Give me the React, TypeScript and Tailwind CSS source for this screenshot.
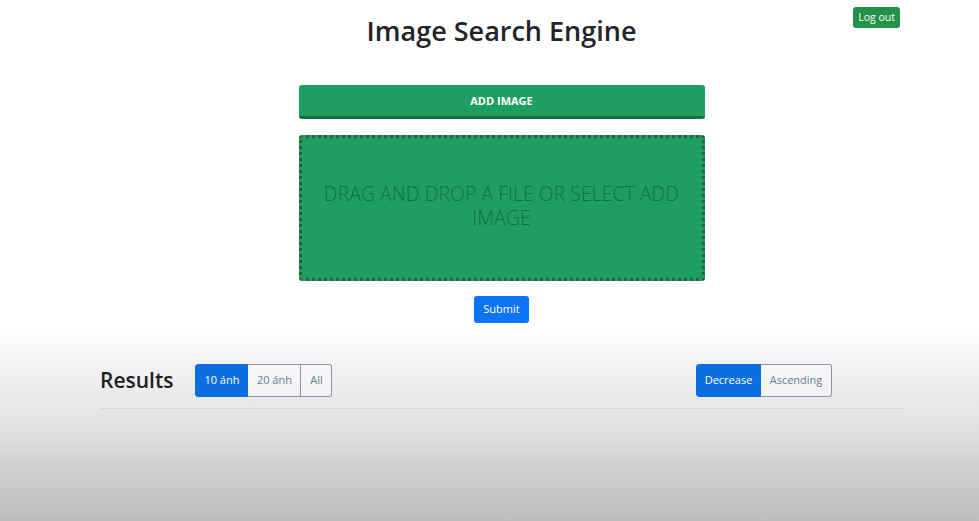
import React, { useState } from "react";

const App: React.FC = () => {
    const [limit, setLimit] = useState("10");
    const [order, setOrder] = useState("decrease");

    const groupBtn = (active: boolean) =>
        active
            ? "bg-[#0b6fe0] text-white border-[#0b6fe0]"
            : "bg-white/40 text-[#6b7a93] border-[#8a96a8]";

    return (
        <div
            className="flex min-h-screen flex-col"
            style={{ fontFamily: '"Open Sans", "Noto Sans", sans-serif' }}
        >
            <div className="bg-white pb-[3px]">
                <div className="ml-[100px] w-[803px]">
                    <div className="grid grid-cols-[1fr_auto_1fr] pt-[7px]">
                        <div />
                        <h1 className="mt-[4px] text-[27px] font-semibold leading-[40px] text-[#212529]">
                            Image Search Engine
                        </h1>
                        <div className="flex justify-end pr-[3px]">
                            <button className="h-[21px] rounded-[3px] bg-[#22924a] px-[5px] text-[10.5px] text-white">
                                Log out
                            </button>
                        </div>
                    </div>

                    <button className="mx-auto mt-[34px] block h-[34px] w-[406px] rounded-[3px] border-b-[3px] border-[#16703f] bg-[#1f9e62] pt-[1px] text-[11px] font-bold text-white">
                        ADD IMAGE
                    </button>

                    <div className="mx-auto mt-[16px] flex h-[146px] w-[406px] items-start justify-center rounded-[3px] border-[3px] border-dotted border-[#2b5c44] bg-[#1e9e63] px-[12px] pt-[44px] text-center text-[19.5px] font-light leading-[24px] text-[#167044]">
                        DRAG AND DROP A FILE OR SELECT ADD IMAGE
                    </div>

                    <div className="mt-[15px] flex justify-center">
                        <button className="h-[27px] w-[55px] rounded-[3px] bg-[#0d74f5] text-[11px] font-medium text-white">
                            Submit
                        </button>
                    </div>
                </div>
            </div>

            <div className="flex-1 bg-gradient-to-b from-white via-[#e2e2e2] to-[#bcbcbc]">
                <div className="ml-[100px] w-[803px] pt-[38px]">
                    <div className="flex items-center pb-[11px]">
                        <h2 className="mr-[22px] text-[21px] font-semibold text-[#1d1f22]">
                            Results
                        </h2>
                        <div className="flex h-[33px] text-[11px]">
                            <button
                                onClick={() => setLimit("10")}
                                className={`w-[53px] rounded-l-[3px] border ${groupBtn(limit === "10")}`}
                            >
                                10 ánh
                            </button>
                            <button
                                onClick={() => setLimit("20")}
                                className={`w-[53px] border border-l-0 ${groupBtn(limit === "20")}`}
                            >
                                20 ánh
                            </button>
                            <button
                                onClick={() => setLimit("all")}
                                className={`w-[31px] rounded-r-[3px] border border-l-0 ${groupBtn(limit === "all")}`}
                            >
                                All
                            </button>
                        </div>

                        <div className="ml-auto mr-[71px] flex h-[33px] text-[11px]">
                            <button
                                onClick={() => setOrder("decrease")}
                                className={`w-[65px] rounded-l-[3px] border ${groupBtn(order === "decrease")}`}
                            >
                                Decrease
                            </button>
                            <button
                                onClick={() => setOrder("ascending")}
                                className={`w-[71px] rounded-r-[3px] border border-l-0 ${groupBtn(order === "ascending")}`}
                            >
                                Ascending
                            </button>
                        </div>
                    </div>
                    <hr className="border-t border-[#d6d6d6]" />
                </div>
            </div>
        </div>
    );
};

export default App;
